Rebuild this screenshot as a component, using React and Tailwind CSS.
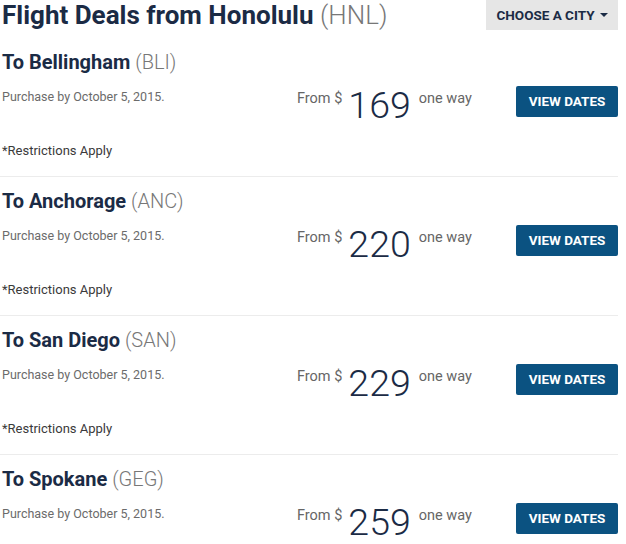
import React from "react";

const deals = [
  { city: "Bellingham", code: "BLI", price: 169 },
  { city: "Anchorage", code: "ANC", price: 220 },
  { city: "San Diego", code: "SAN", price: 229 },
  { city: "Spokane", code: "GEG", price: 259 },
];

const DealRow = ({ deal, first, last }) => {
  return (
    <div
      className={`${first ? "pt-[20px]" : "pt-[12px]"} pb-[16px] ${
        last ? "" : "border-b border-[#ececec]"
      }`}
    >
      <h3 className="pl-[2px] text-[20px] leading-[24px] text-[#1b2b45]">
        <span className="font-bold">To {deal.city}</span>{" "}
        <span className="font-light text-[#777]">({deal.code})</span>
      </h3>
      <div className="flex items-start mt-[12px] h-[37px]">
        <div className="w-[297px] pl-[2px] mt-[2px] text-[12.5px] leading-[18px] text-[#6b6b6b]">
          Purchase by October 5, 2015.
        </div>
        <div className="flex items-start flex-1">
          <span className="text-[14.5px] leading-[20px] text-[#666] mt-[3px]">From $</span>
          <span className="text-[37.5px] leading-[36px] font-light text-[#1b2b45] ml-[6px] mt-[1px]">
            {deal.price}
          </span>
          <span className="text-[14.5px] leading-[20px] text-[#666] ml-[8px] mt-[3px]">
            one way
          </span>
        </div>
        <button className="w-[102px] h-[31px] rounded-[2px] bg-[#0b5281] text-white text-[13.5px] font-bold">
          VIEW DATES
        </button>
      </div>
      <div className="mt-[19px] pl-[2px] text-[13px] leading-[18px] text-[#3a3a3a]">
        *Restrictions Apply
      </div>
    </div>
  );
};

export default function App() {
  return (
    <div className="w-[626px] h-[544px] overflow-hidden bg-white font-['Roboto',sans-serif]">
      <div className="flex items-start justify-between pr-[8px]">
        <h1 className="pl-[2px] text-[26px] leading-[30px] text-[#1b2b45]">
          <span className="font-bold">Flight Deals from Honolulu</span>{" "}
          <span className="font-light text-[#777]">(HNL)</span>
        </h1>
        <button className="h-[30px] w-[132px] bg-[#e6e6e6] text-[#1b2b45] text-[13.5px] font-bold flex items-center justify-center gap-[5px]">
          CHOOSE A CITY
          <svg width="8" height="4" viewBox="0 0 8 4">
            <path d="M0 0h8L4 4z" fill="#1b2b45" />
          </svg>
        </button>
      </div>
      <div className="pr-[8px]">
        {deals.map((d, i) => (
          <DealRow
            key={d.code}
            deal={d}
            first={i === 0}
            last={i === deals.length - 1}
          />
        ))}
      </div>
    </div>
  );
}
